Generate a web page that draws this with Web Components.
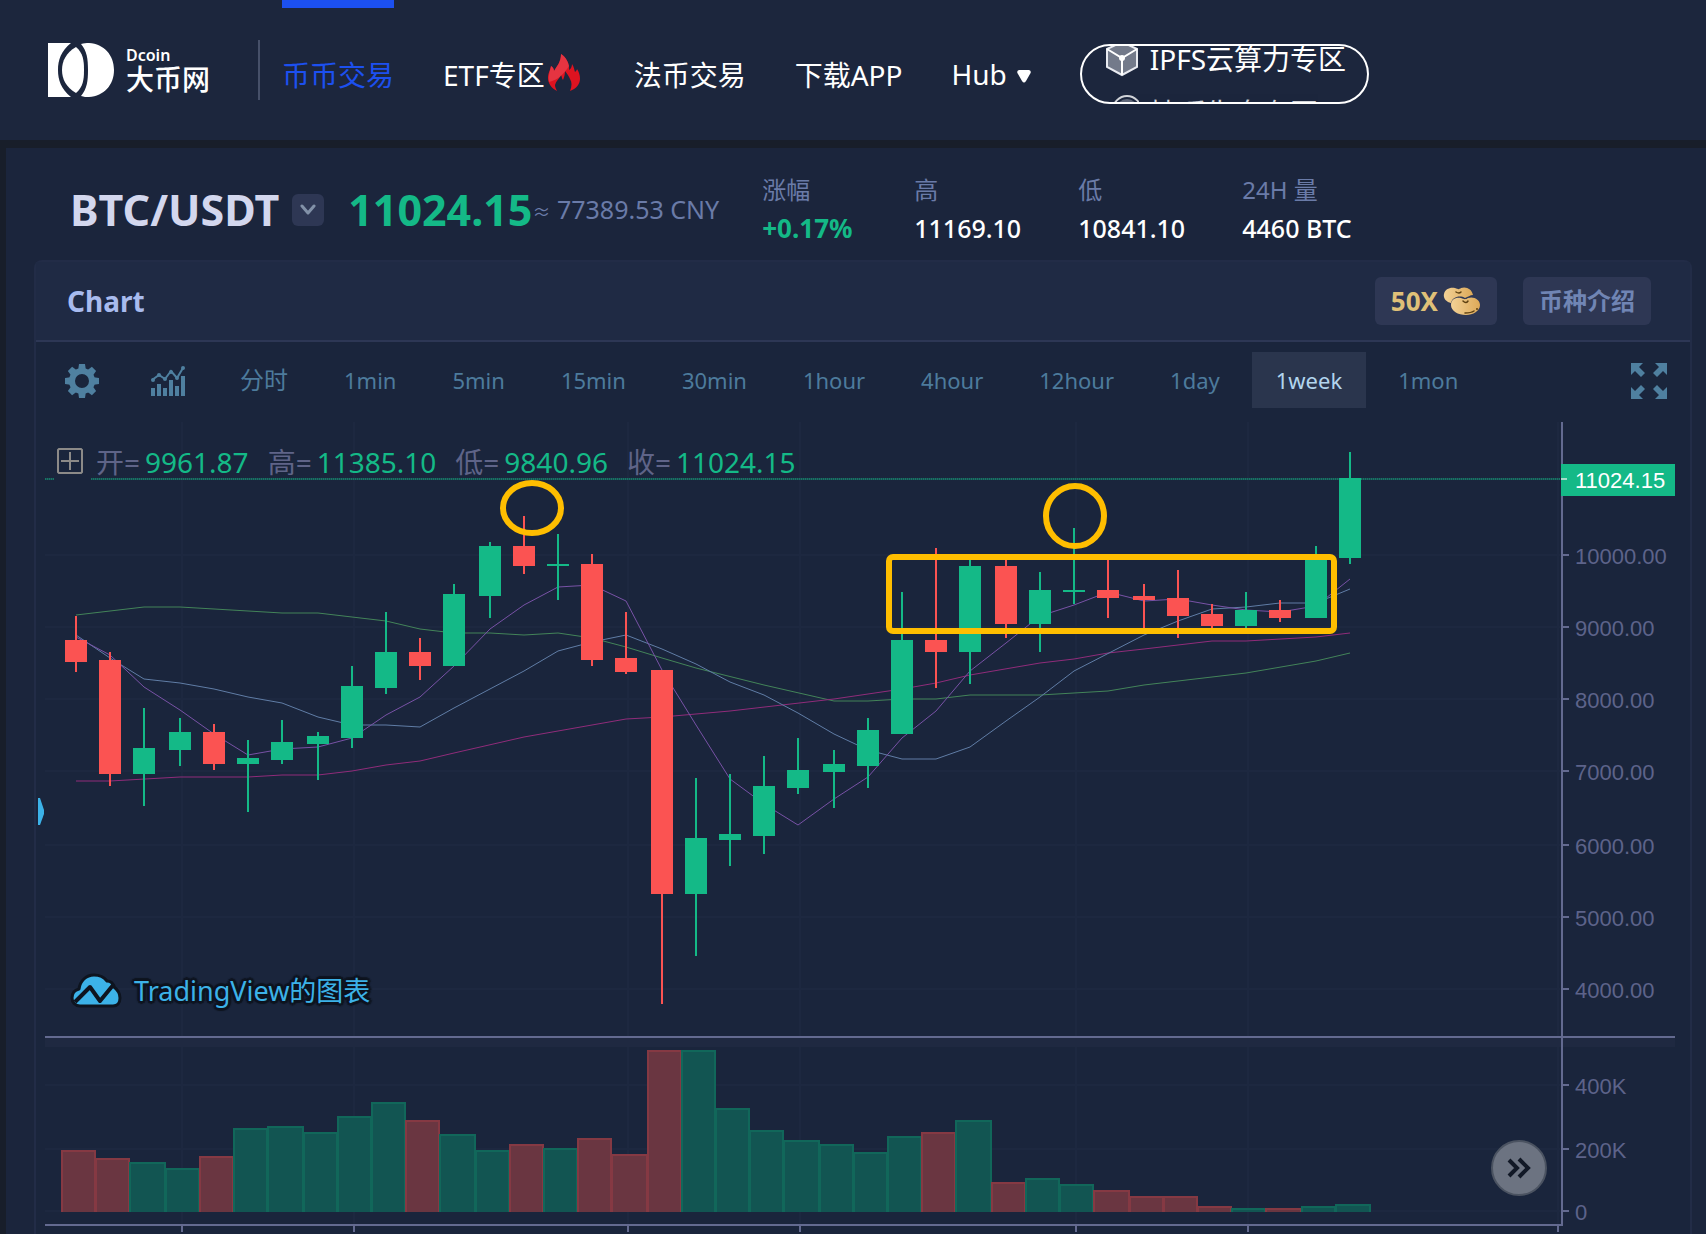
<!DOCTYPE html>
<html lang="zh-CN">
<head>
<meta charset="utf-8">
<meta name="viewport" content="width=device-width, initial-scale=1">
<title>BTC/USDT</title>
<style>
body {
    margin: 0;
    background: #181e2a;
    color: #fff;
    font-family: "Noto Sans", "Noto Sans CJK SC", sans-serif;
}
</style>
</head>
<body>
<exchange-header>
    <site-logo slot="logo"></site-logo>
    <nav-item active>币币交易</nav-item>
    <nav-item icon="fire">ETF专区</nav-item>
    <nav-item>法币交易</nav-item>
    <nav-item>下载APP</nav-item>
    <nav-item icon="caret">Hub</nav-item>
    <promo-pill slot="promo"></promo-pill>
</exchange-header>
<trade-page>
    <pair-ticker pair="BTC/USDT" price="11024.15" cny="77389.53">
        <ticker-stat label="涨幅" up>+0.17%</ticker-stat>
        <ticker-stat label="高">11169.10</ticker-stat>
        <ticker-stat label="低">10841.10</ticker-stat>
        <ticker-stat label="24H 量">4460 BTC</ticker-stat>
    </pair-ticker>
    <chart-card>
        <chart-toolbar current="1week"></chart-toolbar>
        <candle-chart></candle-chart>
    </chart-card>
</trade-page>

<script>
"use strict";

const shadow = ( el, html ) => {
    el.attachShadow( { mode: "open" } ).innerHTML = html;
    return el.shadowRoot;
};

/* [ header ]
=================================== */
class ExchangeHeader extends HTMLElement {
    constructor() {
        super();
        shadow( this, `
<style>
    :host { display: block; background: #1c263d; }
    header { display: flex; align-items: center; height: 140px; padding-left: 48px; }
    i { width: 2px; height: 60px; margin: 0 22px 0 48px; background: #465069; }
    nav { display: flex; align-self: stretch; gap: 49px; margin-right: 49px; }
</style>
<header>
    <slot name="logo"></slot>
    <i></i>
    <nav><slot></slot></nav>
    <slot name="promo"></slot>
</header>` );
    }
}
customElements.define( "exchange-header", ExchangeHeader );

class SiteLogo extends HTMLElement {
    constructor() {
        super();
        shadow( this, `
<style>
    :host { display: block; }
    a { display: flex; align-items: center; gap: 11px; color: #fff; text-decoration: none; }
    span { display: flex; flex-direction: column; padding-bottom: 4px; font-weight: 500; }
    b { font-size: 16px; line-height: 22px; font-weight: 600; }
    em { font-style: normal; font-size: 28px; line-height: 26px; }
</style>
<a href="#">
    <svg width="67" height="54" viewBox="0 0 67 54">
        <path fill="#fff" d="M0 0H23C13 8 10 17 10 27S13 46 23 54H0Z"/>
        <path fill="#fff" d="M28 4C35 10 36 17 36 27S35 44 28 50C18 44 14 36 14 27S18 10 28 4Z"/>
        <path fill="#fff" d="M33 1C36 0 38 0 41 0C56 1 66 12 66 27S56 53 41 54C38 54 36 54 33 53C39 46 40 38 40 27S39 8 33 1Z"/>
    </svg>
    <span><b>Dcoin</b><em>大币网</em></span>
</a>` );
    }
}
customElements.define( "site-logo", SiteLogo );

const navIcons = {
    fire: `<svg class="fire" width="33" height="37" viewBox="0 0 33 37">
        <path fill="#dd1320" d="M9 37C3 34 0 29 0 24C0 19 2 17 3 12C5 13 6 15 6 17C9 12 13 8 13 0C18 3 22 10 21 16C23 15 24 12 24 10C26 13 26 15 27 18C28 17 29 16 29 15C31 18 32 21 32 25C32 30 28 35 22 37C24 32 24 28 22 25C21 22 19 20 17 17C17 21 16 23 15 26C14 25 14 23 13 21C11 25 8 27 7 31C7 33 8 35 9 37Z"/>
        <path fill="#e84350" opacity=".7" d="M1 28C0 22 2 17 3 12C5 13 6 15 6 17C9 12 13 8 13 0C18 3 20 8 21 12C16 20 10 26 1 28Z"/>
    </svg>`,
    caret: `<svg class="caret" width="14" height="13" viewBox="0 0 14 13"><path fill="#fff" d="M2 0H12Q15 1 13 4L9 11Q7 14 5 11L1 4Q-1 1 2 0Z"/></svg>`
};

class NavItem extends HTMLElement {
    connectedCallback() {
        shadow( this, `
<style>
    :host { display: block; position: relative; }
    a { display: flex; align-items: center; height: 148px; gap: 3px; color: #fff; font-size: 28px; text-decoration: none; white-space: nowrap; }
    .fire { margin: 0 4px 4px 0; }
    .caret { margin: 4px 0 0 7px; }
    :host([active]) a { color: #1c50f0; }
    :host([active])::before { content: ""; position: absolute; top: 0; left: 0; right: 0; height: 8px; background: #1c50f0; }
</style>
<a href="#"><slot></slot>${ navIcons[ this.getAttribute( "icon" ) ] || "" }</a>` );
    }
}
customElements.define( "nav-item", NavItem );

class PromoPill extends HTMLElement {
    constructor() {
        super();
        shadow( this, `
<style>
    :host { display: block; margin-top: 8px; }
    div { box-sizing: border-box; width: 289px; height: 60px; padding-left: 23px; overflow: hidden; border: 2px solid #fff; border-radius: 30px; }
    a { display: flex; align-items: center; gap: 11px; height: 26px; color: #fff; font-size: 28px; line-height: 28px; text-decoration: none; white-space: nowrap; }
    a + a { height: 42px; margin-top: 20px; opacity: .8; }
    a + a svg { align-self: flex-start; }
</style>
<div>
    <a href="#">
        <svg width="34" height="36" viewBox="0 0 34 36">
            <path fill="#737a8a" stroke="#e8eaf0" stroke-width="2" d="M17 1L32 8V26L17 34L2 26V8Z"/>
            <path fill="none" stroke="#fff" stroke-width="2" d="M2 8L17 17L32 8M17 17V34"/>
            <circle cx="17" cy="17" r="3" fill="#fff"/>
        </svg>
        IPFS云算力专区
    </a>
    <a href="#">
        <svg width="34" height="34" viewBox="0 0 34 34">
            <circle cx="22" cy="18" r="14" fill="none" stroke="#fff" stroke-width="2"/>
            <circle cx="22" cy="18" r="11" fill="#737a8a"/>
        </svg>
        持币生息专区
    </a>
</div>` );
    }
}
customElements.define( "promo-pill", PromoPill );

/* [ pair and 24h numbers ]
=================================== */
class TradePage extends HTMLElement {
    constructor() {
        super();
        shadow( this, `
<style>
    :host { display: block; margin: 8px 0 0 6px; padding: 0 14px 0 28px; background: #1b253c; }
</style>
<slot></slot>` );
    }
}
customElements.define( "trade-page", TradePage );

class PairTicker extends HTMLElement {
    connectedCallback() {
        shadow( this, `
<style>
    :host { display: flex; align-items: flex-start; height: 112px; padding-left: 36px; white-space: nowrap; }
    section { display: flex; align-items: center; height: 124px; margin-right: 43px; }
    h1 { margin: 0 13px 0 0; color: #d3d7ee; font-size: 43px; line-height: 48px; }
    button { display: grid; place-items: center; width: 32px; height: 32px; margin-right: 24px; padding: 0; border: 0; border-radius: 6px; background: #2e3754; }
    strong { color: #14b987; font-size: 43px; line-height: 48px; }
    span { color: #6a7ba8; font-size: 25px; line-height: 48px; }
    small { font-size: 18px; }
    div { display: grid; grid-template-columns: 152px 164px 164px 164px; padding-top: 23px; }
</style>
<section>
    <h1>${ this.getAttribute( "pair" ) }</h1>
    <button aria-label="选择交易对">
        <svg width="18" height="12" viewBox="0 0 18 12"><path fill="none" stroke="#8291a8" stroke-width="3" stroke-linecap="round" stroke-linejoin="round" d="M3 2L9 9L15 2"/></svg>
    </button>
    <strong>${ this.getAttribute( "price" ) }</strong>
    <span><small>≈</small> ${ this.getAttribute( "cny" ) } CNY</span>
</section>
<div><slot></slot></div>` );
    }
}
customElements.define( "pair-ticker", PairTicker );

class TickerStat extends HTMLElement {
    connectedCallback() {
        shadow( this, `
<style>
    :host { display: flex; flex-direction: column; font-size: 24px; line-height: 38px; }
    span { color: #6a7ba8; }
    b { font-size: 25px; font-weight: 500; }
    :host([up]) b { color: #14b987; font-size: 26px; font-weight: 700; }
</style>
<span>${ this.getAttribute( "label" ) }</span>
<b><slot></slot></b>` );
    }
}
customElements.define( "ticker-stat", TickerStat );

/* [ chart card ]
=================================== */
class ChartCard extends HTMLElement {
    constructor() {
        super();
        shadow( this, `
<style>
    :host { display: block; border: 2px solid #222c47; border-bottom: 0; border-radius: 8px 8px 0 0; background: #1a253c; }
    header { display: flex; align-items: center; gap: 26px; height: 78px; padding: 0 39px 0 31px; border-bottom: 2px solid #2d3755; background: #1f2a44; }
    h2 { flex: 1; margin: 0; color: #a8bbee; font-size: 28px; }
    button { display: flex; align-items: center; gap: 6px; height: 48px; padding: 0 16px; border: 0; border-radius: 6px; background: #2e3754; color: #7085b4; font: bold 24px/46px "Noto Sans", "Noto Sans CJK SC", sans-serif; }
    .lever { gap: 5px; color: #dfc078; font-size: 26px; }
</style>
<header>
    <h2>Chart</h2>
    <button class="lever">50X
        <svg width="38" height="29" viewBox="0 0 38 29">
            <defs><linearGradient id="bean"><stop offset="0" stop-color="#f2d196"/><stop offset="1" stop-color="#dda958"/></linearGradient></defs>
            <path fill="url(#bean)" d="M8 16C3 15 0 11 1 7C2 2 7 0 12 1C15 2 16 3 18 1C23 -1 29 2 30 8C27 8 25 10 22 11C17 8 9 10 8 16Z"/>
            <path fill="url(#bean)" d="M8 18C8 12 13 10 18 11C21 12 22 13 25 11C31 9 37 13 37 18C37 24 30 28 23 28C15 28 8 24 8 18Z"/>
            <path fill="none" stroke="#5d4011" stroke-width="1.5" stroke-linecap="round" d="M13 5Q16 7 18 5M20 14Q23 17 25 14M22 26Q28 26 31 24"/>
            <circle cx="34" cy="22" r="1" fill="#5d4011"/>
        </svg>
    </button>
    <button>币种介绍</button>
</header>
<slot></slot>` );
    }
}
customElements.define( "chart-card", ChartCard );

class ChartToolbar extends HTMLElement {
    connectedCallback() {
        const current = this.getAttribute( "current" ),
            periods = [ "分时", "1min", "5min", "15min", "30min", "1hour", "4hour", "12hour", "1day", "1week", "1mon" ];
        /* eight teeth of the settings wheel */
        const teeth = [ 0, 45, 90, 135, 180, 225, 270, 315 ].map( a => `<path d="M-3 -17H3L4 -10H-4Z" transform="rotate(${ a })"/>` ).join( "" );
        shadow( this, `
<style>
    :host { display: flex; align-items: center; height: 56px; padding: 10px 23px 14px 29px; }
    button { display: grid; place-items: center; height: 56px; padding: 0 24px; border: 0; background: none; color: #4d7b9c; font: 22px "Noto Sans", "Noto Sans CJK SC", sans-serif; }
    button[aria-pressed=true] { background: #2a354d; color: #b2d5ee; }
    .icon { padding: 2px 0 0; }
    .settings { margin-right: 52px; }
    .study { margin-right: 30px; }
    .times { display: flex; flex: 1; gap: 8px; }
    .line { font-size: 24px; line-height: 28px; }
</style>
<button class="icon settings" aria-label="设置">
    <svg width="34" height="34" viewBox="-17 -17 34 34"><g fill="#4f80a0">${ teeth }</g><circle r="10" fill="none" stroke="#4f80a0" stroke-width="6"/></svg>
</button>
<button class="icon study" aria-label="指标">
    <svg width="35" height="31" viewBox="0 0 35 31">
        <path fill="#4f80a0" d="M0 22H4V30H0ZM6 18H10V30H6ZM12 22H16V30H12ZM18 14H22V30H18ZM24 20H28V30H24ZM30 10H34V30H30Z"/>
        <path fill="none" stroke="#4f80a0" stroke-width="2" d="M1 14L8 9L14 13L20 5L26 12L32 2"/>
        <g fill="#4f80a0"><circle cx="2" cy="14" r="2"/><circle cx="8" cy="9" r="2"/><circle cx="14" cy="13" r="2"/><circle cx="20" cy="6" r="2"/><circle cx="26" cy="12" r="2"/><circle cx="32" cy="2" r="2"/></g>
    </svg>
</button>
<div class="times">${ periods.map( p => `<button class="${ p == "分时" ? "line" : "" }" aria-pressed="${ p == current }">${ p }</button>` ).join( "" ) }</div>
<button class="icon" aria-label="全屏">
    <svg width="36" height="36" viewBox="0 0 36 36"><g fill="#4f80a0">
        <path d="M0 0H12L8 4L14 10L10 14L4 8L0 12Z"/>
        <path d="M36 0H24L28 4L22 10L26 14L32 8L36 12Z"/>
        <path d="M0 36H12L8 32L14 26L10 22L4 28L0 24Z"/>
        <path d="M36 36H24L28 32L22 26L26 22L32 28L36 24Z"/>
    </g></svg>
</button>` );
    }
}
customElements.define( "chart-toolbar", ChartToolbar );

/* [ candles: x, high, body top, body bottom, low, volume top, up ]
=================================== */
const candles = [
    [ 76, 616, 640, 662, 672, 1150, 0 ], [ 110, 652, 660, 774, 786, 1158, 0 ],
    [ 144, 708, 748, 774, 806, 1162, 1 ], [ 180, 718, 732, 750, 766, 1168, 1 ],
    [ 214, 724, 732, 764, 770, 1156, 0 ], [ 248, 740, 758, 764, 812, 1128, 1 ],
    [ 282, 720, 742, 760, 764, 1126, 1 ], [ 318, 732, 736, 744, 780, 1132, 1 ],
    [ 352, 666, 686, 738, 748, 1116, 1 ], [ 386, 612, 652, 688, 694, 1102, 1 ],
    [ 420, 638, 652, 666, 680, 1120, 0 ], [ 454, 584, 594, 666, 666, 1134, 1 ],
    [ 490, 542, 546, 596, 618, 1150, 1 ], [ 524, 516, 546, 566, 574, 1144, 0 ],
    [ 558, 534, 564, 566, 600, 1148, 1 ], [ 592, 554, 564, 660, 666, 1138, 0 ],
    [ 626, 612, 658, 672, 674, 1154, 0 ], [ 662, 670, 670, 894, 1004, 1050, 0 ],
    [ 696, 778, 838, 894, 956, 1050, 1 ], [ 730, 774, 834, 840, 866, 1108, 1 ],
    [ 764, 756, 786, 836, 854, 1130, 1 ], [ 798, 738, 770, 788, 794, 1140, 1 ],
    [ 834, 750, 764, 772, 808, 1144, 1 ], [ 868, 718, 730, 766, 788, 1152, 1 ],
    [ 902, 592, 640, 734, 734, 1136, 1 ], [ 936, 548, 640, 652, 688, 1132, 0 ],
    [ 970, 558, 566, 652, 684, 1120, 1 ], [ 1006, 558, 566, 624, 638, 1182, 0 ],
    [ 1040, 572, 590, 624, 652, 1178, 1 ], [ 1074, 528, 590, 592, 604, 1184, 1 ],
    [ 1108, 558, 590, 598, 618, 1190, 0 ], [ 1144, 584, 596, 600, 630, 1196, 0 ],
    [ 1178, 570, 598, 616, 638, 1196, 0 ], [ 1212, 604, 614, 626, 630, 1206, 0 ],
    [ 1246, 592, 610, 626, 630, 1208, 1 ], [ 1280, 600, 610, 618, 622, 1208, 0 ],
    [ 1316, 546, 558, 618, 618, 1206, 1 ], [ 1350, 452, 478, 558, 564, 1204, 1 ]
];
const averages = [
    [ "#438459", "76,615 144,607 180,607 282,613 318,613 386,621 420,629 454,633 490,633 524,635 558,633 592,638 626,647 662,658 696,668 764,685 834,701 868,701 902,699 936,699 970,695 1040,695 1108,691 1144,685 1246,673 1316,661 1350,653" ],
    [ "#902c7a", "76,781 110,781 180,777 248,777 282,775 318,775 352,771 386,765 420,761 454,753 524,737 626,719 662,717 730,711 834,699 902,689 936,683 970,675 1040,663 1074,659 1108,653 1144,649 1212,641 1246,641 1316,637 1350,633" ],
    [ "#607da6", "76,635 110,658 144,679 180,683 214,689 248,697 282,703 318,717 352,725 386,725 420,727 454,708 524,671 558,651 592,642 626,635 662,649 696,664 730,682 764,695 798,713 834,734 868,750 902,759 936,759 970,747 1006,721 1040,697 1074,671 1144,635 1178,621 1212,609 1246,607 1280,603 1316,603 1350,589" ],
    [ "#7852a6", "76,637 110,655 144,687 180,710 214,734 248,755 282,749 318,747 352,738 386,715 420,697 454,666 490,629 524,605 558,587 592,585 626,601 662,670 696,725 730,779 764,804 798,825 834,799 868,777 902,738 936,711 970,671 1006,643 1040,616 1074,605 1108,592 1144,601 1178,599 1212,605 1246,610 1280,612 1316,606 1350,579" ]
];
const scale = [ [ 555, "10000.00" ], [ 627, "9000.00" ], [ 699, "8000.00" ], [ 771, "7000.00" ], [ 845, "6000.00" ], [ 917, "5000.00" ], [ 989, "4000.00" ], [ 1085, "400K" ], [ 1149, "200K" ], [ 1211, "0" ] ];
const weeks = [ 182, 354, 628, 800, 1076, 1248, 1558 ];

class CandleChart extends HTMLElement {
    constructor() {
        super();
        shadow( this, `
<style>
    :host { display: block; position: relative; }
    .plot { display: block; width: 100%; height: auto; font: 22px "Liberation Sans", Arial, sans-serif; }
    .legend { position: absolute; top: 20px; left: 21px; display: flex; align-items: center; gap: 19px; font-size: 28px; line-height: 40px; color: #5f6488; white-space: nowrap; }
    .legend button { width: 26px; height: 28px; margin-right: -6px; padding: 0; border: 0; background: none; }
    .legend b { margin-left: 5px; color: #14b987; font-weight: 400; }
    .mark { position: absolute; top: 548px; left: 34px; display: flex; align-items: center; gap: 12px; color: #3cb2e8; font-size: 27px; line-height: 42px; text-decoration: none; text-shadow: -3px 0 1px #0e141f, 3px 0 1px #0e141f, 0 -3px 1px #0e141f, 0 3px 1px #0e141f, -2px -2px 1px #0e141f, 2px -2px 1px #0e141f, -2px 2px 1px #0e141f, 2px 2px 1px #0e141f; }
    .latest { position: absolute; top: 718px; right: 143px; display: grid; place-items: center; width: 56px; height: 56px; padding: 0; border: 2px solid #4b5361; border-radius: 50%; background: #6c7381; }
</style>
<svg class="plot" viewBox="36 422 1654 812"></svg>
<div class="legend">
    <button aria-label="展开"><svg width="26" height="26" viewBox="0 0 26 26"><path fill="none" stroke="#8c8a88" stroke-width="2" d="M2 1H24L25 2V24L24 25H2L1 24V2ZM13 4V22M4 13H22"/></svg></button>
    <span>开=<b>9961.87</b></span>
    <span>高=<b>11385.10</b></span>
    <span>低=<b>9840.96</b></span>
    <span>收=<b>11024.15</b></span>
</div>
<a class="mark" href="#">
    <svg width="52" height="36" viewBox="0 0 52 36">
        <path fill="#3cb2e8" stroke="#0e141f" stroke-width="3" stroke-linejoin="round" d="M10 33C5 33 2 29 2 25C2 20 5 17 9 16C10 8 16 2 24 2C30 2 34 4 37 8C41 8 43 10 44 14C48 17 50 20 50 25C50 30 47 33 43 33Z"/>
        <path fill="none" stroke="#0e141f" stroke-width="4" stroke-linejoin="round" d="M5 29L20 14L30 28L44 11"/>
    </svg>
    <span>TradingView的图表</span>
</a>
<button class="latest" aria-label="滚动到最新">
    <svg width="24" height="22" viewBox="0 0 24 22"><path fill="none" stroke="#111826" stroke-width="4" d="M2 3L10 11L2 19M12 2L21 11L12 20"/></svg>
</button>` );
    }
    connectedCallback() {
        this.shadowRoot.querySelector( ".plot" ).innerHTML = this.grid() + this.volume() + this.prices() + this.axes() + this.drawings();
    }
    grid() {
        let rows = scale.map( ( [ y ] ) => `M45 ${ y }H1560` ).join( "" ),
            cols = weeks.map( x => `M${ x } 422V1224` ).join( "" );
        return `<path d="${ rows }${ cols }" stroke="#1d2840" stroke-width="2"/>
<rect x="45" y="1038" width="1630" height="9" fill="#1f2941"/>
<path d="M45 479H54M91 479H1560" stroke="#177464" stroke-width="2" stroke-dasharray="1 1"/>
<path d="M45 479H54M91 479H1560" stroke="#184c51" stroke-width="2" stroke-dasharray="1 1" stroke-dashoffset="1"/>`;
    }
    volume() {
        return candles.map( ( [ x, , , , , top, up ], i ) => {
            let left = x - 15,
                right = ( candles[ i + 1 ] ? candles[ i + 1 ][ 0 ] : 1385 ) - 14,
                color = up ? "#10b07f" : "#f5474c";
            return `<path d="M${ left } 1212V${ top }H${ right }V1212Z" fill="${ up ? "#125552" : "#6a3641" }"/>
<path d="M${ left + 1 } 1212V${ top + 1 }H${ right - 1 }V1212" fill="none" stroke="${ color }" stroke-width="2" opacity=".2"/>`;
        } ).join( "" );
    }
    prices() {
        let lines = averages.map( ( [ color, points ] ) => `<polyline points="${ points }" fill="none" stroke="${ color }" stroke-width="1"/>` ).join( "" );
        return lines + candles.map( ( [ x, high, top, bottom, low, , up ] ) =>
            `<path fill="${ up ? "#14b987" : "#fb5352" }" d="M${ x - 1 } ${ high }h2V${ low }h-2ZM${ x - 11 } ${ top }h22V${ bottom }h-22Z"/>`
        ).join( "" );
    }
    axes() {
        let labels = scale.map( ( [ y, text ] ) => `<text x="1575" y="${ y + 9 }" fill="#5d638a">${ text }</text>` ).join( "" ),
            ticks = scale.map( ( [ y ] ) => `M1563 ${ y }h6` ).join( "" ) + weeks.map( x => `M${ x } 1226v6` ).join( "" );
        return `<path d="M1562 422V1225M45 1037H1675M45 1225H1563${ ticks }" stroke="#636a90" stroke-width="2"/>
${ labels }
<rect x="1561" y="464" width="114" height="32" fill="#14b987"/>
<path d="M1561 479h6" stroke="#a3dfcb" stroke-width="2"/>
<text x="1575" y="488" fill="#fff">11024.15</text>
<path fill="#3cb2e8" d="M38 798H40L44 810V814L40 825H38Z"/>`;
    }
    drawings() {
        return `<g fill="none" stroke="#ffbe00" stroke-width="6">
<ellipse cx="532" cy="508" rx="29" ry="25"/>
<ellipse cx="1075" cy="516" rx="29" ry="30"/>
<rect x="889" y="557" width="445" height="74" rx="4"/>
</g>`;
    }
}
customElements.define( "candle-chart", CandleChart );
</script>
</body>
</html>
